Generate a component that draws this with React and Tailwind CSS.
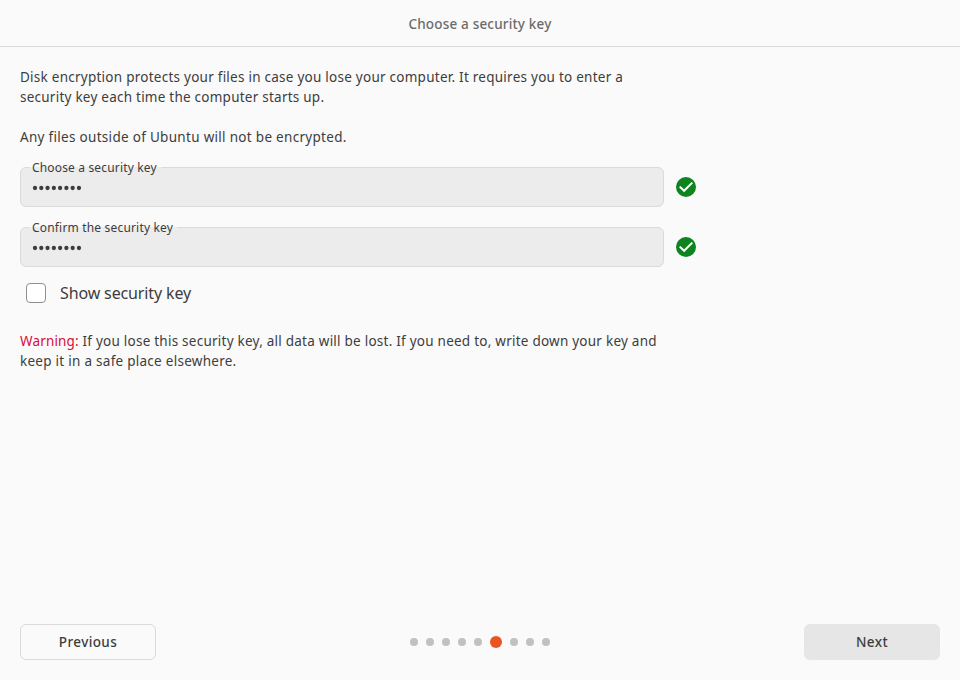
import React from "react";

const DOTS = 9;
const ACTIVE = 5;

function CheckMark() {
  return (
    <svg width="20" height="20" viewBox="0 0 20 20" className="ml-3 shrink-0">
      <circle cx="10" cy="10" r="10" fill="#0e8420" />
      <path d="M3.7 9.6 L8.1 13.8 L16.3 5.6" fill="none" stroke="#fff" strokeWidth="2" />
    </svg>
  );
}

function MaskedValue() {
  return (
    <svg width="52" height="8" viewBox="0 0 52 8" className="mt-[1px]" fill="#3d3d3d">
      {Array.from({ length: 8 }, (_, i) => (
        <circle key={i} cx={3 + i * 6.28} cy="4" r="2.15" />
      ))}
    </svg>
  );
}

function KeyField({ label, labelClass }) {
  return (
    <div className="flex items-center">
      <div className="relative flex h-10 w-[644px] items-center rounded-md border border-[#dadada] bg-[#ececec] pl-[11px]">
        <span className="absolute -top-px left-2 flex h-px items-center bg-[#ececec] pr-1 pl-[3px]">
          <span className={"whitespace-nowrap text-[12px] leading-4 " + labelClass}>{label}</span>
        </span>
        <MaskedValue />
      </div>
      <CheckMark />
    </div>
  );
}

export default function App() {
  return (
    <div className="flex h-[680px] w-[960px] flex-col bg-[#fafafa] font-['Noto_Sans',sans-serif] text-[#3d3d3d]">
      <header className="flex h-[47px] shrink-0 items-center justify-center border-b border-[#dadada] pt-px text-[13.5px] font-medium text-[#6b6b6b]">
        <h1 className="leading-5 tracking-[0.18px]">Choose a security key</h1>
      </header>

      <main className="flex grow flex-col px-5 pt-5 text-[13.5px] leading-5">
        <p className="whitespace-nowrap">
          <span className="tracking-[0.252px]">Disk encryption protects your files in case you lose your computer. It requires you to enter a</span>
          <br />
          <span className="tracking-[0.24px]">security key each time the computer starts up.</span>
        </p>
        <p className="mt-5 whitespace-nowrap tracking-[0.3px]">Any files outside of Ubuntu will not be encrypted.</p>

        <div className="mt-5 flex flex-col gap-5">
          <KeyField label="Choose a security key" labelClass="tracking-[0.16px]" />
          <KeyField label="Confirm the security key" labelClass="tracking-[0.18px]" />
        </div>

        <label className="mt-4 ml-1.5 flex items-center">
          <span className="h-5 w-5 rounded border border-[#8f8f8f] bg-white" />
          <span className="ml-3.5 whitespace-nowrap text-[16px] leading-5 tracking-[-0.13px]">Show security key</span>
        </label>

        <p className="mt-7 whitespace-nowrap">
          <span className="tracking-[0.24px]">
            <span className="tracking-[0.15px] text-[#d80c38]">Warning:</span> If you lose this security key, all data will be lost. If you need to, write down your key and
          </span>
          <br />
          <span className="tracking-[0.27px]">keep it in a safe place elsewhere.</span>
        </p>
      </main>

      <footer className="flex shrink-0 items-center justify-between px-5 pb-5 text-[13.5px] font-medium">
        <button className="h-9 w-[136px] rounded-md border border-[#dadada] tracking-[0.4px]">Previous</button>
        <div className="flex items-center gap-2">
          {Array.from({ length: DOTS }, (_, i) => (
            <span key={i} className={i === ACTIVE ? "h-3 w-3 rounded-full bg-[#e95420]" : "h-2 w-2 rounded-full bg-[#c0c0c0]"} />
          ))}
        </div>
        <button className="h-9 w-[136px] rounded-md bg-[#e6e6e6] tracking-[0.4px]">Next</button>
      </footer>
    </div>
  );
}
